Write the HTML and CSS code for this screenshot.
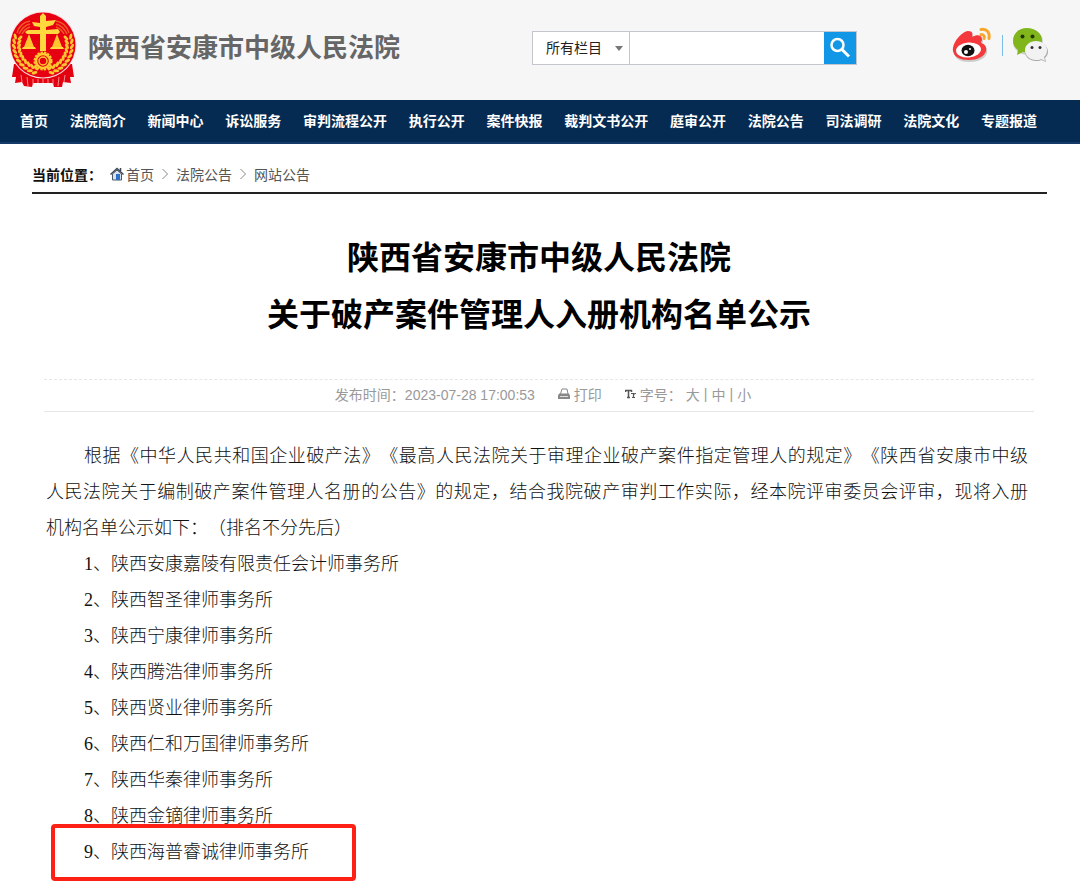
FILE: index.html
```html
<!DOCTYPE html>
<html lang="zh-CN">
<head>
    <meta charset="UTF-8">
    <meta name="viewport" content="width=device-width, initial-scale=1.0">
    <title>陕西省安康市中级人民法院</title>
    <link rel="stylesheet" href="styles.css">
</head>
<body>
    <header class="header">
        <a class="logo" href="#">
            <svg class="emblem" viewBox="0 0 68 78" aria-hidden="true">
                <defs>
                    <g id="grain" fill="#fbc531">
                        <ellipse cx="5" cy="34" rx="1.500" ry="3" transform="rotate(-30 5 34)"/>
                        <ellipse cx="10" cy="34" rx="1.500" ry="3" transform="rotate(30 10 34)"/>
                    </g>
                    <g id="wheat">
                        <use href="#grain" transform="rotate(17 34 34)"/>
                        <use href="#grain" transform="rotate(7 34 34)"/>
                        <use href="#grain" transform="rotate(-3 34 34)"/>
                        <use href="#grain" transform="rotate(-13 34 34)"/>
                        <use href="#grain" transform="rotate(-23 34 34)"/>
                        <use href="#grain" transform="rotate(-33 34 34)"/>
                        <use href="#grain" transform="rotate(-43 34 34)"/>
                        <use href="#grain" transform="rotate(-53 34 34)"/>
                        <use href="#grain" transform="rotate(-63 34 34)"/>
                        <use href="#grain" transform="rotate(-73 34 34)"/>
                        <path d="M8 22C10 15 15 11 21 10M10 23C13 17 16 14 21 13M13 23C15 19 18 17 21 16" fill="none" stroke="#ef5a24" stroke-width="1.500"/>
                    </g>
                </defs>
                <!-- ribbon -->
                <path d="M5 53 L3 66 L7 66 L6 72 L13 71 L15 75 L23 76 L24 72 L44 72 L45 76 L53 76 L54 71 L62 72 L61 66 L65 66 L63 53 Z" fill="#e3000f"/>
                <path d="M12 64l1 7M18 66l1 9M24 68v5M44 68v5M50 66l-1 9M56 64l-1 7M29 68v4M34 68v4M39 68v4" stroke="#f58a8a"/>
                <circle cx="34" cy="34" r="33.500" fill="#f9dede"/>
                <circle cx="34" cy="34" r="32.500" fill="#e60012"/>
                <use href="#wheat"/>
                <use href="#wheat" transform="translate(68 0) scale(-1 1)"/>
                <!-- scales -->
                <path d="M31 5l3-3 3 3v5l10-1-3 5-7 2v3l12-1 2 3-2 2H37v17h-6V23H18l-2-2 3-2h12v-3l-6-1-2-4 8 1z" fill="#ffd83d"/>
                <path d="M20 23l-5 13h10zM48 23l-5 13h10z" fill="#ffc52f"/>
                <path d="M14 36h12l1 2H13zM42 36h12l1 2H41z" fill="#ffd83d"/>
                <!-- gear -->
                <circle cx="34" cy="50" r="8" fill="none" stroke="#ffc92f" stroke-width="3" stroke-dasharray="2.200 1"/>
                <circle cx="34" cy="50" r="7" fill="#e60012" stroke="#ffc92f" stroke-width="2.500"/>
                <circle cx="34" cy="50" r="4" fill="#e60012" stroke="#ffc92f" stroke-width="1.500"/>
            </svg>
            <span class="site-name">陕西省安康市中级人民法院</span>
        </a>

        <form class="search">
            <div class="select-box">
                <select id="column" aria-label="栏目">
                    <option>所有栏目</option>
                </select>
                <span class="arrow"></span>
            </div>
            <input type="text" id="keyword" aria-label="关键词">
            <button type="submit" aria-label="搜索">
                <svg width="22" height="22" viewBox="0 0 22 22" fill="none" stroke="#fff">
                    <circle cx="8.500" cy="8" r="6" stroke-width="2.500"/>
                    <path d="M13 12.500l7 7" stroke-width="3"/>
                </svg>
            </button>
        </form>

        <div class="social">
            <a href="#" aria-label="微博">
                <svg width="42" height="36" viewBox="0 0 42 36">
                    <path d="M3 26C2 18 11 7 18 7c4 0 5 3 4 5 4-2 10-2 10 2 0 2-1 3-1 4 4 1 6 4 5 8-2 6-9 9-18 9-8 0-14-3-15-9z" fill="#b9b9b9" opacity=".7"/>
                    <path d="M2 24C1 16 10 5 17 4c5 0 5 3 4 6 5-3 10-2 10 2 0 2-1 3-1 4 4 1 6 4 5 8-2 6-9 9-17 9-9 0-15-3-16-9z" fill="#f4383b"/>
                    <ellipse cx="17.500" cy="23" rx="12.500" ry="7.500" fill="#fff" transform="rotate(-5 17 23)"/>
                    <ellipse cx="17" cy="23.500" rx="6.500" ry="5.800" fill="#111"/>
                    <circle cx="15" cy="25" r="2" fill="#fff"/>
                    <circle cx="19" cy="22" r="1" fill="#fff"/>
                    <path d="M30 2.500c6-1 9 3 8 9M30 7.500c3 0 4 2 3 4" fill="none" stroke="#f8a62c" stroke-width="3" stroke-linecap="round"/>
                </svg>
            </a>
            <span class="line"></span>
            <a href="#" aria-label="微信">
                <svg width="38" height="36" viewBox="0 0 38 36">
                    <ellipse cx="16" cy="15" rx="15" ry="13" fill="#aaa" opacity=".5"/>
                    <path d="M15 1C7 1 1 6 1 14c0 4 2 7 5 9l-1 5 6-3c12 3 19-3 19-12C30 6 23 1 15 1z" fill="#80b61c"/>
                    <circle cx="10.500" cy="9.500" r="2" fill="#273500"/>
                    <circle cx="20.500" cy="9.500" r="2" fill="#273500"/>
                    <path d="M24 15c-6 0-11 4-11 10 0 5 5 9 11 9 2 0 4 0 5-1l5 2-1-4c2-2 3-4 3-6 0-6-5-10-12-10z" fill="#aaa"/>
                    <path d="M24 14c-6 0-11 4-11 9 0 6 5 10 11 10 2 0 4 0 5-1l4 2-1-4c2-2 3-4 3-7 0-5-5-9-11-9z" fill="#f2f2f2"/>
                    <circle cx="20" cy="20.500" r="1.500" fill="#333"/>
                    <circle cx="28" cy="20.500" r="1.500" fill="#333"/>
                </svg>
            </a>
        </div>
    </header>

    <nav class="nav">
        <a href="#">首页</a>
        <a href="#">法院简介</a>
        <a href="#">新闻中心</a>
        <a href="#">诉讼服务</a>
        <a href="#">审判流程公开</a>
        <a href="#">执行公开</a>
        <a href="#">案件快报</a>
        <a href="#">裁判文书公开</a>
        <a href="#">庭审公开</a>
        <a href="#">法院公告</a>
        <a href="#">司法调研</a>
        <a href="#">法院文化</a>
        <a href="#">专题报道</a>
    </nav>

    <main class="container">
        <div class="crumb">
            <strong>当前位置：</strong>
            <svg class="home" width="14" height="14" viewBox="0 0 14 14" aria-hidden="true">
                <path d="M2.500 7v6h9V7L7 3z" fill="#d9e2ec" stroke="#4b5866"/>
                <path d="M0.500 7.500L7 1.500l6.500 6M10.500 1v3" fill="none" stroke="#3d4753" stroke-width="1.500"/>
                <path d="M6 7h4v6H6z" fill="#2d73c8"/>
            </svg>
            <a href="#">首页</a>
            <svg class="sep" width="6" height="12" viewBox="0 0 6 12" aria-hidden="true"><path d="M0.500 1l5 5-5 5"/></svg>
            <a href="#">法院公告</a>
            <svg class="sep" width="6" height="12" viewBox="0 0 6 12" aria-hidden="true"><path d="M0.500 1l5 5-5 5"/></svg>
            <a href="#">网站公告</a>
        </div>

        <article class="article">
            <h1>陕西省安康市中级人民法院<br>关于破产案件管理人入册机构名单公示</h1>

            <div class="meta">
                <span>发布时间：2023-07-28 17:00:53</span>
                <a class="print" href="#">
                    <svg width="12" height="12" viewBox="0 0 12 12" aria-hidden="true">
                        <path d="M2.500 6l1.500-5h5l1 5" fill="#fff" stroke="#888"/>
                        <path d="M1 5.500h10l1 2V11H0V7.500z" fill="#888"/>
                        <path d="M2 8.500h8" stroke="#ddd"/>
                    </svg>
                    打印
                </a>
                <div class="size">
                    <svg width="11" height="10" viewBox="0 0 11 10" fill="none" stroke="#555" aria-hidden="true">
                        <path d="M0 1.500h7M3.500 1v7M2 8.500h3M0.500 1v2M6.500 1v2" stroke-width="1.500"/>
                        <path d="M6 4.500h2.500v4M7 8.500h3M8.500 5.500q1-1 2.500-1" stroke-width="1.200"/>
                    </svg>
                    <span>字号：</span>
                    <a href="#">大</a>|<a href="#">中</a>|<a href="#">小</a>
                </div>
            </div>

            <div class="content">
                <p class="full">根据《中华人民共和国企业破产法》《最高人民法院关于审理企业破产案件指定管理人的规定》《陕西省安康市中级<br>人民法院关于编制破产案件管理人名册的公告》的规定，结合我院破产审判工作实际，经本院评审委员会评审，现将入册<br><span class="last">机构名单公示如下：（排名不分先后）</span></p>
                <p>1、陕西安康嘉陵有限责任会计师事务所</p>
                <p>2、陕西智圣律师事务所</p>
                <p>3、陕西宁康律师事务所</p>
                <p>4、陕西腾浩律师事务所</p>
                <p>5、陕西贤业律师事务所</p>
                <p>6、陕西仁和万国律师事务所</p>
                <p>7、陕西华秦律师事务所</p>
                <p>8、陕西金镝律师事务所</p>
                <p class="marked">9、陕西海普睿诚律师事务所</p>
            </div>
        </article>
    </main>
</body>
</html>
```
FILE: styles.css
```css
* {
    box-sizing: border-box;
}
body {
    margin: 0;
    background: #fff;
    color: #333;
    font-family: "Liberation Sans", "Noto Sans CJK SC", sans-serif;
    font-size: 14px;
    text-spacing-trim: space-all;
}
a {
    color: inherit;
    text-decoration: none;
}
svg {
    display: block;
    flex: none;
}

/* header */
.header {
    display: flex;
    align-items: center;
    height: 100px;
    padding: 0 30px 0 9px;
    background: #f6f6f6;
}
.logo {
    display: flex;
    align-items: center;
    gap: 11px;
}
.emblem {
    width: 68px;
    height: 78px;
}
.site-name {
    color: #666;
    font-size: 26px;
    font-weight: bold;
    line-height: 40px;
    padding-bottom: 4px;
}
.search {
    display: flex;
    width: 325px;
    height: 34px;
    margin: 0 0 4px auto;
    border: 1px solid #c3c7cd;
    background: #fff;
}
.select-box {
    display: flex;
    align-items: center;
    position: relative;
    width: 97px;
    border-right: 1px solid #c3c7cd;
}
.select-box select {
    width: 100%;
    height: 32px;
    padding: 0 0 0 13px;
    border: none;
    background: transparent;
    color: #222;
    font-family: inherit;
    font-size: 14px;
    appearance: none;
}
.arrow {
    position: absolute;
    right: 6px;
    top: 14px;
    border: 4px solid transparent;
    border-top: 5px solid #777;
    pointer-events: none;
}
.search input {
    flex: 1;
    min-width: 0;
    border: none;
    padding: 0 8px;
    font-size: 14px;
}
.search button {
    display: flex;
    align-items: center;
    justify-content: center;
    width: 32px;
    padding: 0;
    border: none;
    background: #1296e6;
    cursor: pointer;
}
.social {
    display: flex;
    align-items: center;
    gap: 9px;
    margin: 0 0 10px 94px;
}
.social .line {
    width: 1px;
    height: 21px;
    background: #7cbde6;
}

/* nav */
.nav {
    display: flex;
    justify-content: space-between;
    height: 44px;
    padding: 0 43px 0 20px;
    border-bottom: 2px solid #133a68;
    background: #052b52;
    color: #fff;
    font-weight: bold;
    line-height: 43px;
    white-space: nowrap;
}

/* breadcrumb */
.container {
    padding: 0 33px 11px 32px;
}
.crumb {
    display: flex;
    align-items: center;
    height: 50px;
    padding-top: 12px;
    border-bottom: 2px solid #222;
    color: #555;
}
.crumb strong {
    margin-right: 8px;
    color: #111;
}
.crumb .home {
    margin-right: 2px;
}
.crumb .sep {
    margin: 0 8px;
    fill: none;
    stroke: #888;
}

/* article */
.article {
    padding: 36px 13px 0 12px;
}
h1 {
    margin: 0 0 35px;
    color: #000;
    font-size: 32px;
    line-height: 57px;
    text-align: center;
}
.meta {
    display: flex;
    align-items: center;
    justify-content: center;
    gap: 23px;
    height: 33px;
    padding: 0 0 4px 8px;
    border-top: 1px dashed #e6e6e6;
    border-bottom: 1px solid #e6e6e6;
    color: #999;
}
.print, .size {
    display: flex;
    align-items: center;
    gap: 4px;
}
.content {
    padding: 26px 6px 0 2px;
    color: #111;
    font-family: "Liberation Serif", "Noto Sans CJK SC", serif;
    font-size: 18px;
    font-weight: 300;
    line-height: 36px;
}
.content p {
    margin: 0;
    text-indent: 38px;
}
.content .full {
    text-align: justify;
    text-align-last: justify;
}
.content .last {
    display: block;
    text-indent: 0;
    text-align-last: left;
}
/* red frame round the highlighted firm */
.marked {
    position: relative;
}
.marked::after {
    content: "";
    position: absolute;
    box-sizing: border-box;
    left: 5px;
    top: -10px;
    width: 305px;
    height: 57px;
    border: 4px solid #ff2015;
    border-radius: 4px;
}
```
